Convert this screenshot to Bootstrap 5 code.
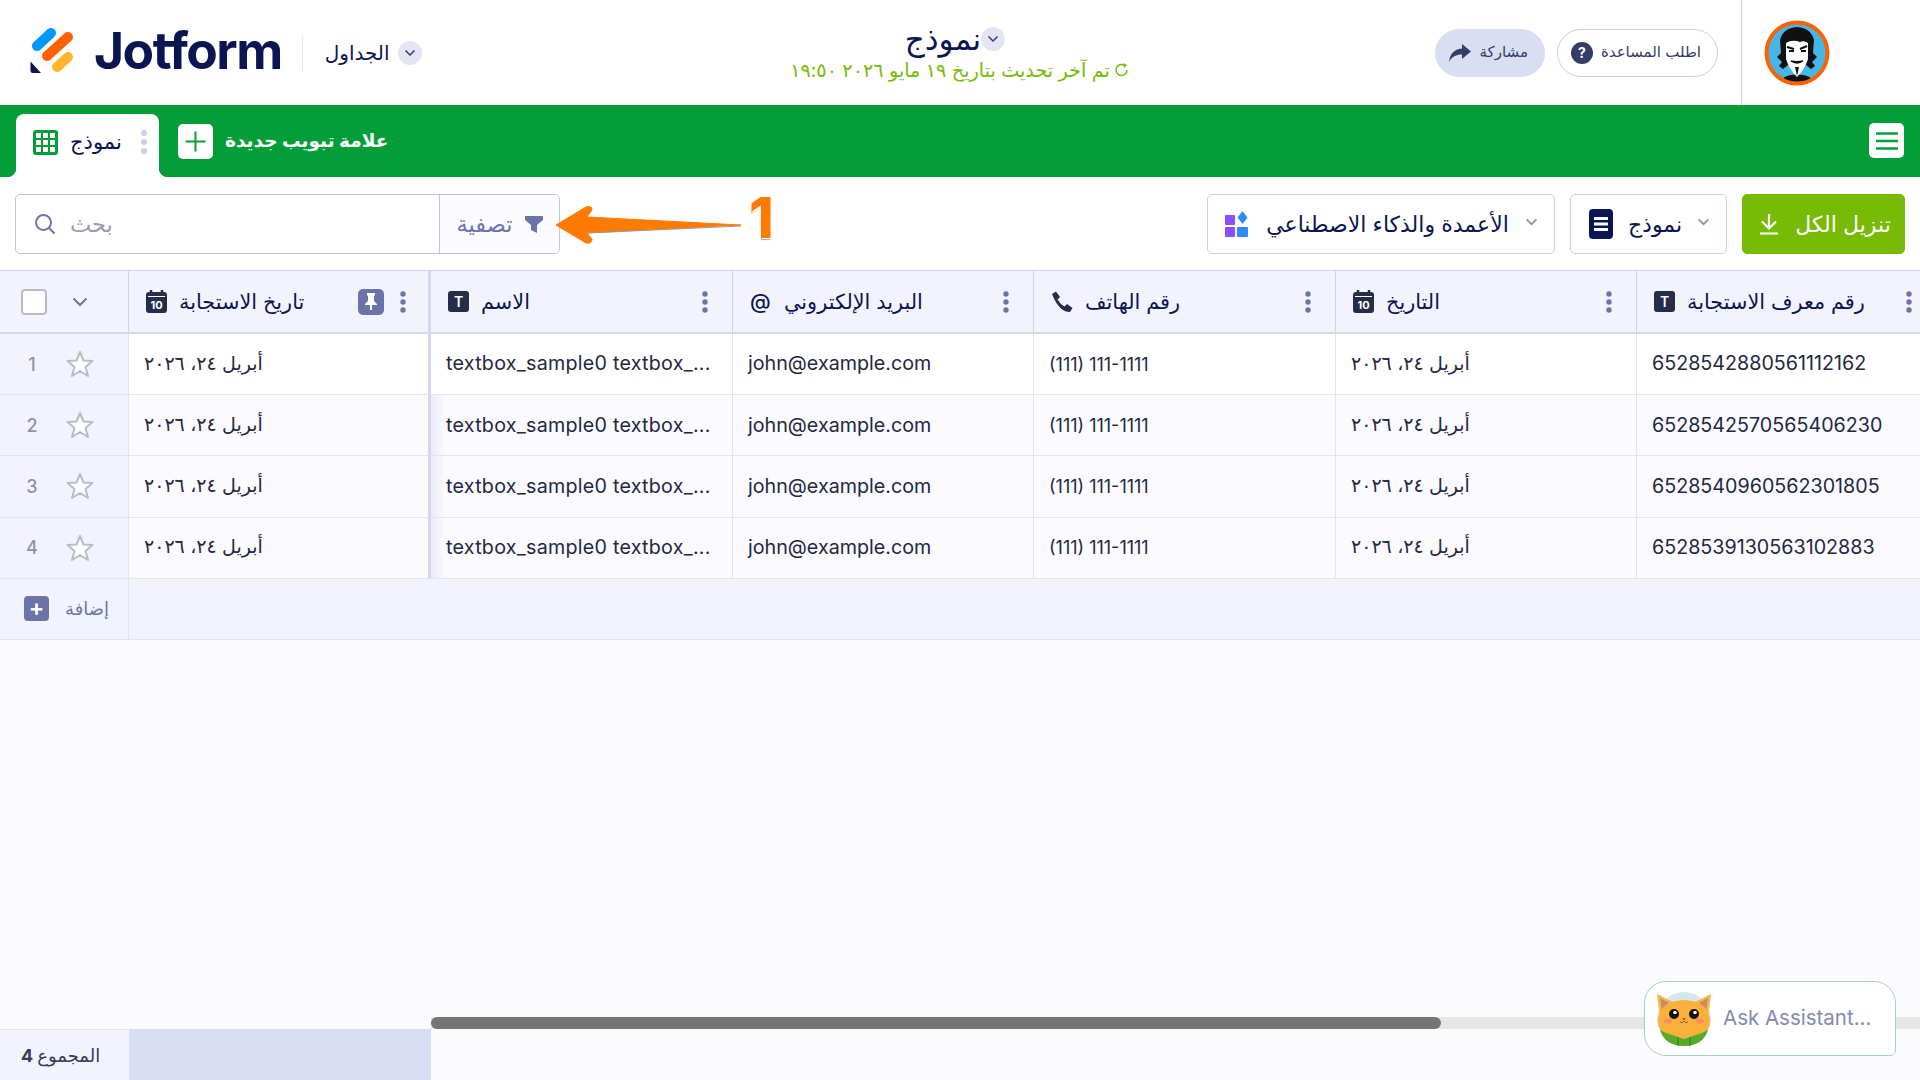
<!DOCTYPE html>
<html lang="ar">
<head>
    <meta charset="UTF-8">
    <title>Jotform Tables</title>
    <link href="https://cdn.jsdelivr.net/npm/bootstrap@5.3.0/dist/css/bootstrap.min.css" rel="stylesheet">
    <style>
        body { font-family: Inter, "Noto Sans", "DejaVu Sans", sans-serif; color: #0a1551; background: #fafaff; height: 100vh; overflow: hidden; }
        .top-bar { height: 105px; background: #fff; display: grid; grid-template-columns: 1fr auto 1fr; align-items: center; }
        .brand-part { padding: 0 0 4px 30px; }
        .brand-word { font-size: 51.500px; font-weight: 700; letter-spacing: -1.500px; line-height: 1; color: #0a1551; margin-left: 20px; }
        .brand-sep { width: 1px; height: 36px; background: #e3e5f0; margin: 4px 22px 0 20px; }
        .tables-link { font-size: 20px; margin-top: 4px; }
        .chev-round { width: 24px; height: 24px; flex: none; border-radius: 50%; background: #e3e5f5; display: inline-flex; align-items: center; justify-content: center; }
        .title-line { margin-right: 10px; }
        .doc-title { font-size: 31px; line-height: 34px; margin-top: -1px; }
        .doc-status { font-size: 19.200px; line-height: 26px; color: #78bb07; margin-top: 1px; }
        .pill-btn { height: 48px; border-radius: 24px; font-size: 15px; color: #343c6a; padding: 0 16px 0 13px; border: 1px solid #c8ceed; background: #fff; }
        .pill-share { background: #dadef3; border-color: #dadef3; padding: 0 16px 0 12px; }
        .help-dot { width: 22px; height: 22px; border-radius: 50%; background: #343c6a; color: #fff; font-size: 14px; font-weight: 700; display: inline-flex; align-items: center; justify-content: center; }
        .avatar-box { width: 179px; height: 105px; border-left: 1px solid #c8ceed; padding-left: 22px; }
        .tab-bar { height: 72px; background: #049e38; padding: 0 16px; }
        .sheet-tab { position: relative; width: 143px; height: 63px; margin-top: 9px; background: #fff; border-radius: 8px 8px 0 0; padding: 0 12px 7px 17px; font-size: 21px; font-weight: 500; }
        .sheet-tab::before, .sheet-tab::after { content: ""; position: absolute; bottom: 0; width: 9px; height: 9px; }
        .sheet-tab::before { left: -9px; background: radial-gradient(circle at 0 0, #049e38 9px, #fff 9.500px); }
        .sheet-tab::after { right: -9px; background: radial-gradient(circle at 100% 0, #049e38 9px, #fff 9.500px); }
        .new-tab { color: #fff; font-size: 18.500px; font-weight: 700; height: 72px; margin-left: 19px; }
        .white-sq { width: 35px; height: 35px; background: #fff; border-radius: 5px; }
        .tool-bar { height: 93px; background: #fff; padding: 17px 15px 0; }
        .search-box { width: 545px; height: 60px; border: 1px solid #c3c6d8; border-radius: 5px; background: #fff; overflow: hidden; }
        .search-icon { flex: none; margin-left: 18px; }
        .search-box .form-control { border: 0; box-shadow: none; font-size: 22.500px; padding: 0 0 0 14px; color: #0a1551; }
        .search-box .form-control::placeholder { color: #979cb0; }
        .filter-part { width: 120px; height: 100%; border-left: 1px solid #c3c6d8; background: #fafaff; color: #6f76a7; font-size: 22.500px; gap: 12px; }
        .tool-btn { height: 60px; border: 1px solid #c8ceed; border-radius: 5px; background: #fff; font-size: 22px; color: #0a1551; }
        .tool-btn:hover { background: #fff; }
        .tool-chev { margin-top: -5px; }
        .btn-get { background: #78bb07; border-color: #78bb07; color: #fff; width: 163px; }
        .btn-get:hover { background: #78bb07; color: #fff; }
        .grid-wrap { flex: 1 1 auto; overflow: hidden; }
        .sheet { table-layout: fixed; width: 1937px; margin: 0; border-collapse: separate; border-spacing: 0; }
        .sheet th, .sheet td { padding: 0 15px; vertical-align: middle; white-space: nowrap; overflow: hidden; border: 0; border-bottom: 1px solid #e3e4f2; border-right: 1px solid #e3e4f2; background: #fafaff; color: #23283f; box-shadow: none; font-size: 19.700px; }
        .sheet thead th { height: 64px; background: #f3f3fe; font-weight: 400; color: #0a1551; border-top: 1px solid #cfd3f0; border-bottom: 2px solid #d5d8ec; border-right-color: #cfd3f0; padding-left: 17px; padding-right: 24px; }
        .sheet thead th.pin-col { padding-right: 22px; }
        .sheet tbody tr { height: 61.200px; }
        .sheet tbody tr:first-child td { background: #fff; }
        .sheet .idx-col, .sheet thead .idx-col, .sheet tbody tr:first-child td.idx-col { background: #f3f3fe; padding: 0; }
        .sheet .pin-col { border-right: 3px solid #d5d8ec; }
        .sheet td.after-pin { background-image: linear-gradient(90deg, #e9ebf7, rgba(236,238,248,0) 14px); letter-spacing: .25px; }
        .sheet .add-row td { background: #f3f3fe; }
        .sheet .ar-cell { font-size: 19px; }
        .sheet .phone-cell { font-size: 18px; }
        .sheet .ar-head { font-size: 20.800px; }
        .row-num { width: 40px; text-align: center; color: #8f93a8; font-size: 18px; font-weight: 500; margin-left: 12px; }
        .check-sq { width: 26px; height: 26px; flex: none; background: #fff; border: 2px solid #b8bbcd; border-radius: 4px; margin-left: 21px; }
        .head-line { gap: 12px; height: 30px; }
        .t-icon { width: 21px; height: 21px; border-radius: 3px; background: #252d4a; color: #fff; font-size: 14px; font-weight: 600; line-height: 21px; text-align: center; flex: none; }
        .at-icon { font-size: 21px; font-weight: 500; line-height: 1; width: 22px; flex: none; }
        .dots-menu { flex: none; display: block; }
        .pin-sq { width: 26px; height: 26px; background: #6c73a8; border-radius: 5px; margin-left: auto; margin-right: 4px; flex: none; }
        .add-label { color: #6f76a7; font-size: 18px; }
        .add-sq { width: 25px; height: 25px; background: #6c73a8; border-radius: 4px; color: #fff; font-size: 23px; font-weight: 600; line-height: 24px; text-align: center; margin-left: 24px; }
        .scroll-track { height: 12px; margin-left: 431px; background: #e6e6e6; }
        .scroll-thumb { width: 1010px; height: 100%; background: #757575; border-radius: 6px; }
        .foot-row { height: 51px; }
        .foot-count { width: 129px; background: #f3f3fe; border-top: 1px solid #e3e4f2; font-size: 18px; color: #343c5a; padding-left: 21px; }
        .foot-fill { width: 302px; background: #dadef3; }
        .ask-box { position: absolute; left: 1644px; top: 981px; width: 252px; height: 75px; background: #fff; border: 1px solid #a9cfcb; border-radius: 22px 22px 6px 22px; color: #8389b4; font-size: 20.500px; padding-left: 12px; gap: 12px; }
        .note-arrow { position: absolute; left: 550px; top: 200px; }
        .note-num { position: absolute; left: 749px; top: 183px; font-size: 56px; line-height: 70px; font-weight: 800; color: #ff7a00; text-shadow: 1px 1px 0 #fff, -2px 0 0 #fff, 0 2px 1px #aaa; }
    </style>
</head>
<body class="d-flex flex-column">

<!-- top header -->
<header class="top-bar">
    <div class="brand-part d-flex align-items-center">
        <svg width="44" height="46" viewBox="0 0 44 46" style="flex:none">
            <path d="M0.500 33.500 L0.500 43 Q0.500 45 3 45 L11 45 Z" fill="#0a1551"/>
            <line x1="7" y1="18" x2="21" y2="5" stroke="#0099ff" stroke-width="10" stroke-linecap="round"/>
            <line x1="17" y1="28" x2="38" y2="9" stroke="#ff6100" stroke-width="10" stroke-linecap="round"/>
            <line x1="27" y1="39" x2="38" y2="29" stroke="#ffb629" stroke-width="10" stroke-linecap="round"/>
        </svg>
        <span class="brand-word">Jotform</span>
        <span class="brand-sep"></span>
        <span class="tables-link" dir="rtl">الجداول</span>
        <span class="chev-round ms-2 mt-1"><svg width="12" height="8" viewBox="0 0 12 8"><path d="M1.500 1.500 L6 6 L10.500 1.500" fill="none" stroke="#343c6a" stroke-width="1.500"/></svg></span>
    </div>
    <div class="d-flex flex-column align-items-center">
        <div class="title-line d-flex align-items-center">
            <span class="doc-title" dir="rtl">نموذج</span>
            <span class="chev-round"><svg width="12" height="8" viewBox="0 0 12 8"><path d="M1.500 1.500 L6 6 L10.500 1.500" fill="none" stroke="#343c6a" stroke-width="1.500"/></svg></span>
        </div>
        <div class="doc-status d-flex align-items-center gap-1" dir="rtl">
            <svg width="16" height="16" viewBox="0 0 16 16"><path d="M13 8 A5.500 5.500 0 1 1 10.500 3.400" fill="none" stroke="#78bb07" stroke-width="1.500"/><path d="M9 1 L13 3 L10 6 Z" fill="#78bb07"/></svg>
            <span>تم آخر تحديث بتاريخ ١٩ مايو ٢٠٢٦ ١٩:٥٠</span>
        </div>
    </div>
    <div class="d-flex justify-content-end align-items-center">
        <button class="btn pill-btn pill-share d-flex align-items-center gap-2 me-2">
            <svg width="24" height="20" viewBox="0 0 24 20"><path d="M14 1 L23 8.500 L14 16 V11.500 C8 11.500 4 13.500 1 19 C2 11 6 6 14 5.500 Z" fill="#343c6a"/></svg>
            <span dir="rtl">مشاركة</span>
        </button>
        <button class="btn pill-btn d-flex align-items-center gap-2" style="margin-left:4px;margin-right:23px">
            <span class="help-dot">?</span>
            <span dir="rtl">اطلب المساعدة</span>
        </button>
        <div class="avatar-box d-flex align-items-center">
            <svg width="66" height="66" viewBox="0 0 66 66" style="flex:none">
                <defs><clipPath id="avaClip"><circle cx="33" cy="33" r="30"/></clipPath></defs>
                <circle cx="33" cy="33" r="30" fill="#45b6e6"/>
                <g clip-path="url(#avaClip)">
                    <path d="M12 66 Q20 53 33 55 Q46 53 54 66 Z" fill="#111"/>
                    <path d="M19 49 L15 46 L18 42 L13 37 L17 33 L16 20 Q19 8 33 7 Q47 8 50 20 L49 33 L53 37 L48 42 L51 46 L47 49 L42 45 L24 45 Z" fill="#111"/>
                    <path d="M22 23 Q28 19 36 22 Q40 20 44 23 L44 39 Q41 49 33 57 Q25 49 22 39 Z" fill="#fff"/>
                    <path d="M23 27 L30 29 M36 29 L43 26" stroke="#111" stroke-width="2.200"/>
                    <path d="M25 31 H30 M37 31 H42" stroke="#111" stroke-width="2"/>
                    <path d="M27 41 Q33 45 39 41 Q33 42.500 27 41 Z" fill="#111" stroke="#111" stroke-width="1.500"/>
                    <path d="M31 47 L33 56 L35 47 Z" fill="#111"/>
                </g>
                <circle cx="33" cy="33" r="30.500" fill="none" stroke="#ff6100" stroke-width="4"/>
            </svg>
        </div>
    </div>
</header>

<!-- tabs -->
<nav class="tab-bar d-flex align-items-start justify-content-between">
    <div class="d-flex">
        <div class="sheet-tab d-flex align-items-center">
            <svg width="25" height="25" viewBox="0 0 25 25"><rect width="25" height="25" rx="3" fill="#049e38"/><g fill="#fff"><rect x="3" y="3" width="5" height="5"/><rect x="10" y="3" width="5" height="5"/><rect x="17" y="3" width="5" height="5"/><rect x="3" y="10" width="5" height="5"/><rect x="10" y="10" width="5" height="5"/><rect x="17" y="10" width="5" height="5"/><rect x="3" y="17" width="5" height="5"/><rect x="10" y="17" width="5" height="5"/><rect x="17" y="17" width="5" height="5"/></g></svg>
            <span class="ms-2 ps-1" dir="rtl">نموذج</span>
            <svg class="ms-auto" width="6" height="28" viewBox="0 0 6 28"><circle cx="3" cy="5" r="3" fill="#c8ceed"/><circle cx="3" cy="14" r="3" fill="#c8ceed"/><circle cx="3" cy="23" r="3" fill="#c8ceed"/></svg>
        </div>
        <div class="new-tab d-flex align-items-center gap-2">
            <span class="white-sq d-flex align-items-center justify-content-center"><svg width="21" height="21" viewBox="0 0 21 21"><path d="M10.500 0.500 V20.500 M0.500 10.500 H20.500" stroke="#049e38" stroke-width="2"/></svg></span>
            <span class="ms-1" dir="rtl">علامة تبويب جديدة</span>
        </div>
    </div>
    <div class="white-sq d-flex align-items-center justify-content-center" style="margin-top:18px">
        <svg width="24" height="20" viewBox="0 0 24 20"><path d="M1 2.500 H23 M1 10 H23 M1 17.500 H23" stroke="#049e38" stroke-width="2.500"/></svg>
    </div>
</nav>

<!-- search and actions -->
<div class="tool-bar d-flex justify-content-between align-items-start">
    <div class="search-box d-flex align-items-center">
        <svg class="search-icon" width="22" height="22" viewBox="0 0 22 22"><circle cx="9.500" cy="9.500" r="7.500" fill="none" stroke="#6f76a7" stroke-width="2"/><path d="M15 15 L20.500 20.500" stroke="#6f76a7" stroke-width="2"/></svg>
        <input class="form-control" type="text" placeholder="بحث" dir="ltr">
        <div class="filter-part d-flex align-items-center justify-content-center flex-shrink-0">
            <span dir="rtl">تصفية</span>
            <svg width="18" height="18" viewBox="0 0 18 18"><path d="M0 1 H18 V5 L12 10 V18 L6 15 V10 L0 5 Z" fill="#6c73a8"/></svg>
        </div>
    </div>
    <div class="d-flex" style="gap:15px">
        <button class="btn tool-btn d-flex align-items-center" style="width:348px;padding:0 16px">
            <svg width="26" height="26" viewBox="0 0 26 26"><rect x="1" y="4" width="10" height="10" rx="1" fill="#8b4dff"/><rect x="1" y="16" width="10" height="10" rx="1" fill="#8b4dff"/><rect x="13" y="16" width="11" height="10" rx="1" fill="#2e8bff"/><path d="M18.500 0 L23.500 6.500 L18.500 13 L13.500 6.500 Z" fill="#2e8bff"/></svg>
            <span class="mx-auto" dir="rtl">الأعمدة والذكاء الاصطناعي</span>
            <svg class="tool-chev" width="13" height="8" viewBox="0 0 14 9"><path d="M1.500 1.500 L7 7 L12.500 1.500" fill="none" stroke="#8f93a8" stroke-width="2"/></svg>
        </button>
        <button class="btn tool-btn d-flex align-items-center" style="width:157px;padding:0 16px 0 18px">
            <svg width="24" height="30" viewBox="0 0 24 30"><rect width="24" height="30" rx="4" fill="#0a1551"/><path d="M5 9.500 H19 M5 15 H19 M5 20.500 H19" stroke="#fff" stroke-width="3"/></svg>
            <span class="mx-auto" dir="rtl">نموذج</span>
            <svg class="tool-chev" width="13" height="8" viewBox="0 0 14 9"><path d="M1.500 1.500 L7 7 L12.500 1.500" fill="none" stroke="#8f93a8" stroke-width="2"/></svg>
        </button>
        <button class="btn tool-btn btn-get d-flex align-items-center justify-content-center gap-3">
            <svg style="margin-left:3px" width="20" height="22" viewBox="0 0 20 22"><path d="M10 1 V15 M3 8.500 L10 15.500 L17 8.500 M1 20.500 H19" fill="none" stroke="#fff" stroke-width="2.200"/></svg>
            <span dir="rtl">تنزيل الكل</span>
        </button>
    </div>
</div>

<!-- data grid -->
<div class="grid-wrap">
    <table class="table sheet">
        <colgroup><col style="width:129px"><col style="width:302px"><col style="width:302px"><col style="width:301px"><col style="width:302px"><col style="width:301px"><col style="width:300px"></colgroup>
        <thead>
            <tr id="headRow">
                <th class="idx-col">
                    <div class="d-flex align-items-center">
                        <span class="check-sq"></span>
                        <svg style="margin-left:25px" width="16" height="10" viewBox="0 0 16 10"><path d="M1.500 1.500 L8 8 L14.500 1.500" fill="none" stroke="#6c73a8" stroke-width="2"/></svg>
                    </div>
                </th>
            </tr>
        </thead>
        <tbody id="rows"></tbody>
    </table>
</div>

<div class="scroll-track"><div class="scroll-thumb"></div></div>
<div class="foot-row d-flex">
    <div class="foot-count d-flex align-items-center gap-1"><b>4</b> <span dir="rtl">المجموع</span></div>
    <div class="foot-fill"></div>
</div>

<!-- floating layers -->
<div class="ask-box d-flex align-items-center">
    <svg width="54" height="54" viewBox="0 0 54 54" style="flex:none">
        <circle cx="27" cy="27" r="27" fill="#d2e9ea"/>
        <path d="M3 38 Q15 30 27 34 Q39 30 51 38 Q46 54 27 54 Q8 54 3 38 Z" fill="#55ac28"/>
        <path d="M0 2 L16 10 L3 26 Z M54 2 L38 10 L51 26 Z" fill="#f8b54b"/>
        <path d="M3 6 L12 11 L5 20 Z M51 6 L42 11 L49 20 Z" fill="#c98a6a"/>
        <path d="M1 30 Q1 9 27 8 Q53 9 53 30 Q53 38 45 41 L27 47 L9 41 Q1 38 1 30 Z" fill="#fbb03b"/>
        <circle cx="17" cy="22" r="5" fill="#111"/><circle cx="37" cy="22" r="5" fill="#111"/>
        <circle cx="18" cy="20.500" r="1.800" fill="#fff"/><circle cx="38" cy="20.500" r="1.800" fill="#fff"/>
        <ellipse cx="11" cy="29" rx="4" ry="2.500" fill="#f98f60"/><ellipse cx="43" cy="29" rx="4" ry="2.500" fill="#f98f60"/>
        <path d="M25 26 H29 L27 28.500 Z" fill="#c6423f"/>
        <path d="M23 30 Q25 32 27 29 Q29 32 31 30" fill="none" stroke="#8a5a2b" stroke-width="1"/>
        <path d="M21 45 V54 M33 45 V54" stroke="#3f8d1c" stroke-width="1.500"/>
    </svg>
    <span>Ask Assistant...</span>
</div>
<svg class="note-arrow" width="200" height="50" viewBox="550 200 200 50">
    <path d="M741 225 L587 217 L592 210 Q592 205 586 207 L556 225 L586 243 Q592 244 592 239 L587 233 Z" fill="#ff7a00" stroke="#ff7a00" stroke-linejoin="round"/>
    <path d="M741 226 L587 233" stroke="#999" stroke-width="1"/>
</svg>
<div class="note-num">1</div>

<script>
    const ICON_CAL = `<svg width="21" height="23" viewBox="0 0 21 23" style="flex:none"><path d="M5 0 V4 M16 0 V4" stroke="#252d4a" stroke-width="2.500"/><rect y="2" width="21" height="21" rx="3" fill="#252d4a"/><rect x="2" y="6" width="17" height="1" fill="#fff"/><text x="10.500" y="19" text-anchor="middle" font-family="Inter" font-size="11" font-weight="700" fill="#fff">10</text></svg>`;
    const ICON_PHONE = `<svg width="22" height="22" viewBox="0 0 22 22" style="flex:none"><path d="M1 3 L5 0.500 L9 6 L6.500 8.500 Q9 13 13.500 15.500 L16 13 L21.500 17 L19 21 Q8 21 1 3 Z" fill="#252d4a"/></svg>`;
    const ICON_DOTS = `<svg class="dots-menu" width="6" height="22" viewBox="0 0 6 22"><circle cx="3" cy="3" r="2.700" fill="#6c73a8"/><circle cx="3" cy="11" r="2.700" fill="#6c73a8"/><circle cx="3" cy="19" r="2.700" fill="#6c73a8"/></svg>`;
    const ICON_STAR = `<svg width="28" height="28" viewBox="0 0 28 28"><path d="M14 2 L17.500 10.500 L26.500 11 L19.500 17 L22 26 L14 21 L6 26 L8.500 17 L1.500 11 L10.500 10.500 Z" fill="#fff" stroke="#b8bbcd" stroke-width="2" stroke-linejoin="round"/></svg>`;
    const ICON_T = `<span class="t-icon">T</span>`;
    const DATE_TEXT = "أبريل ٢٤، ٢٠٢٦";

    const columns = [
        { icon: ICON_CAL, title: "تاريخ الاستجابة", pinned: true },
        { icon: ICON_T, title: "الاسم" },
        { icon: `<span class="at-icon">@</span>`, title: "البريد الإلكتروني" },
        { icon: ICON_PHONE, title: "رقم الهاتف" },
        { icon: ICON_CAL, title: "التاريخ" },
        { icon: ICON_T, title: "رقم معرف الاستجابة" }
    ];
    const ids = ["6528542880561112162", "6528542570565406230", "6528540960562301805", "6528539130563102883"];

    const headRow = document.getElementById("headRow");
    columns.forEach(col => {
        const pin = col.pinned ? `<span class="pin-sq d-flex align-items-center justify-content-center"><svg width="12" height="17" viewBox="0 0 12 17"><path d="M2 0 H10 V2 L9 3 V8 L12 11 V12 H7 V17 H5 V12 H0 V11 L3 8 V3 L2 2 Z" fill="#fff"/></svg></span>` : "";
        headRow.insertAdjacentHTML("beforeend", `
            <th class="${col.pinned ? "pin-col" : ""}">
                <div class="d-flex align-items-center head-line">
                    ${col.icon}<span dir="rtl" class="ar-head">${col.title}</span>
                    ${pin}<span class="${col.pinned ? "" : "ms-auto"} d-flex">${ICON_DOTS}</span>
                </div>
            </th>`);
    });

    const rows = document.getElementById("rows");
    ids.forEach((id, i) => {
        rows.insertAdjacentHTML("beforeend", `
            <tr>
                <td class="idx-col">
                    <div class="d-flex align-items-center"><span class="row-num">${i + 1}</span><span class="d-flex" style="margin-left:14px">${ICON_STAR}</span></div>
                </td>
                <td class="pin-col ar-cell"><span dir="rtl">${DATE_TEXT}</span></td>
                <td class="after-pin">textbox_sample0 textbox_...</td>
                <td>john@example.com</td>
                <td class="phone-cell">(111) 111-1111</td>
                <td class="ar-cell"><span dir="rtl">${DATE_TEXT}</span></td>
                <td>${id}</td>
            </tr>`);
    });
    rows.insertAdjacentHTML("beforeend", `
        <tr class="add-row">
            <td class="idx-col"><div class="d-flex align-items-center gap-3"><span class="add-sq">+</span><span class="add-label" dir="rtl">إضافة</span></div></td>
            <td colspan="6"></td>
        </tr>`);
</script>
<script src="https://cdn.jsdelivr.net/npm/bootstrap@5.3.0/dist/js/bootstrap.bundle.min.js"></script>
</body>
</html>
